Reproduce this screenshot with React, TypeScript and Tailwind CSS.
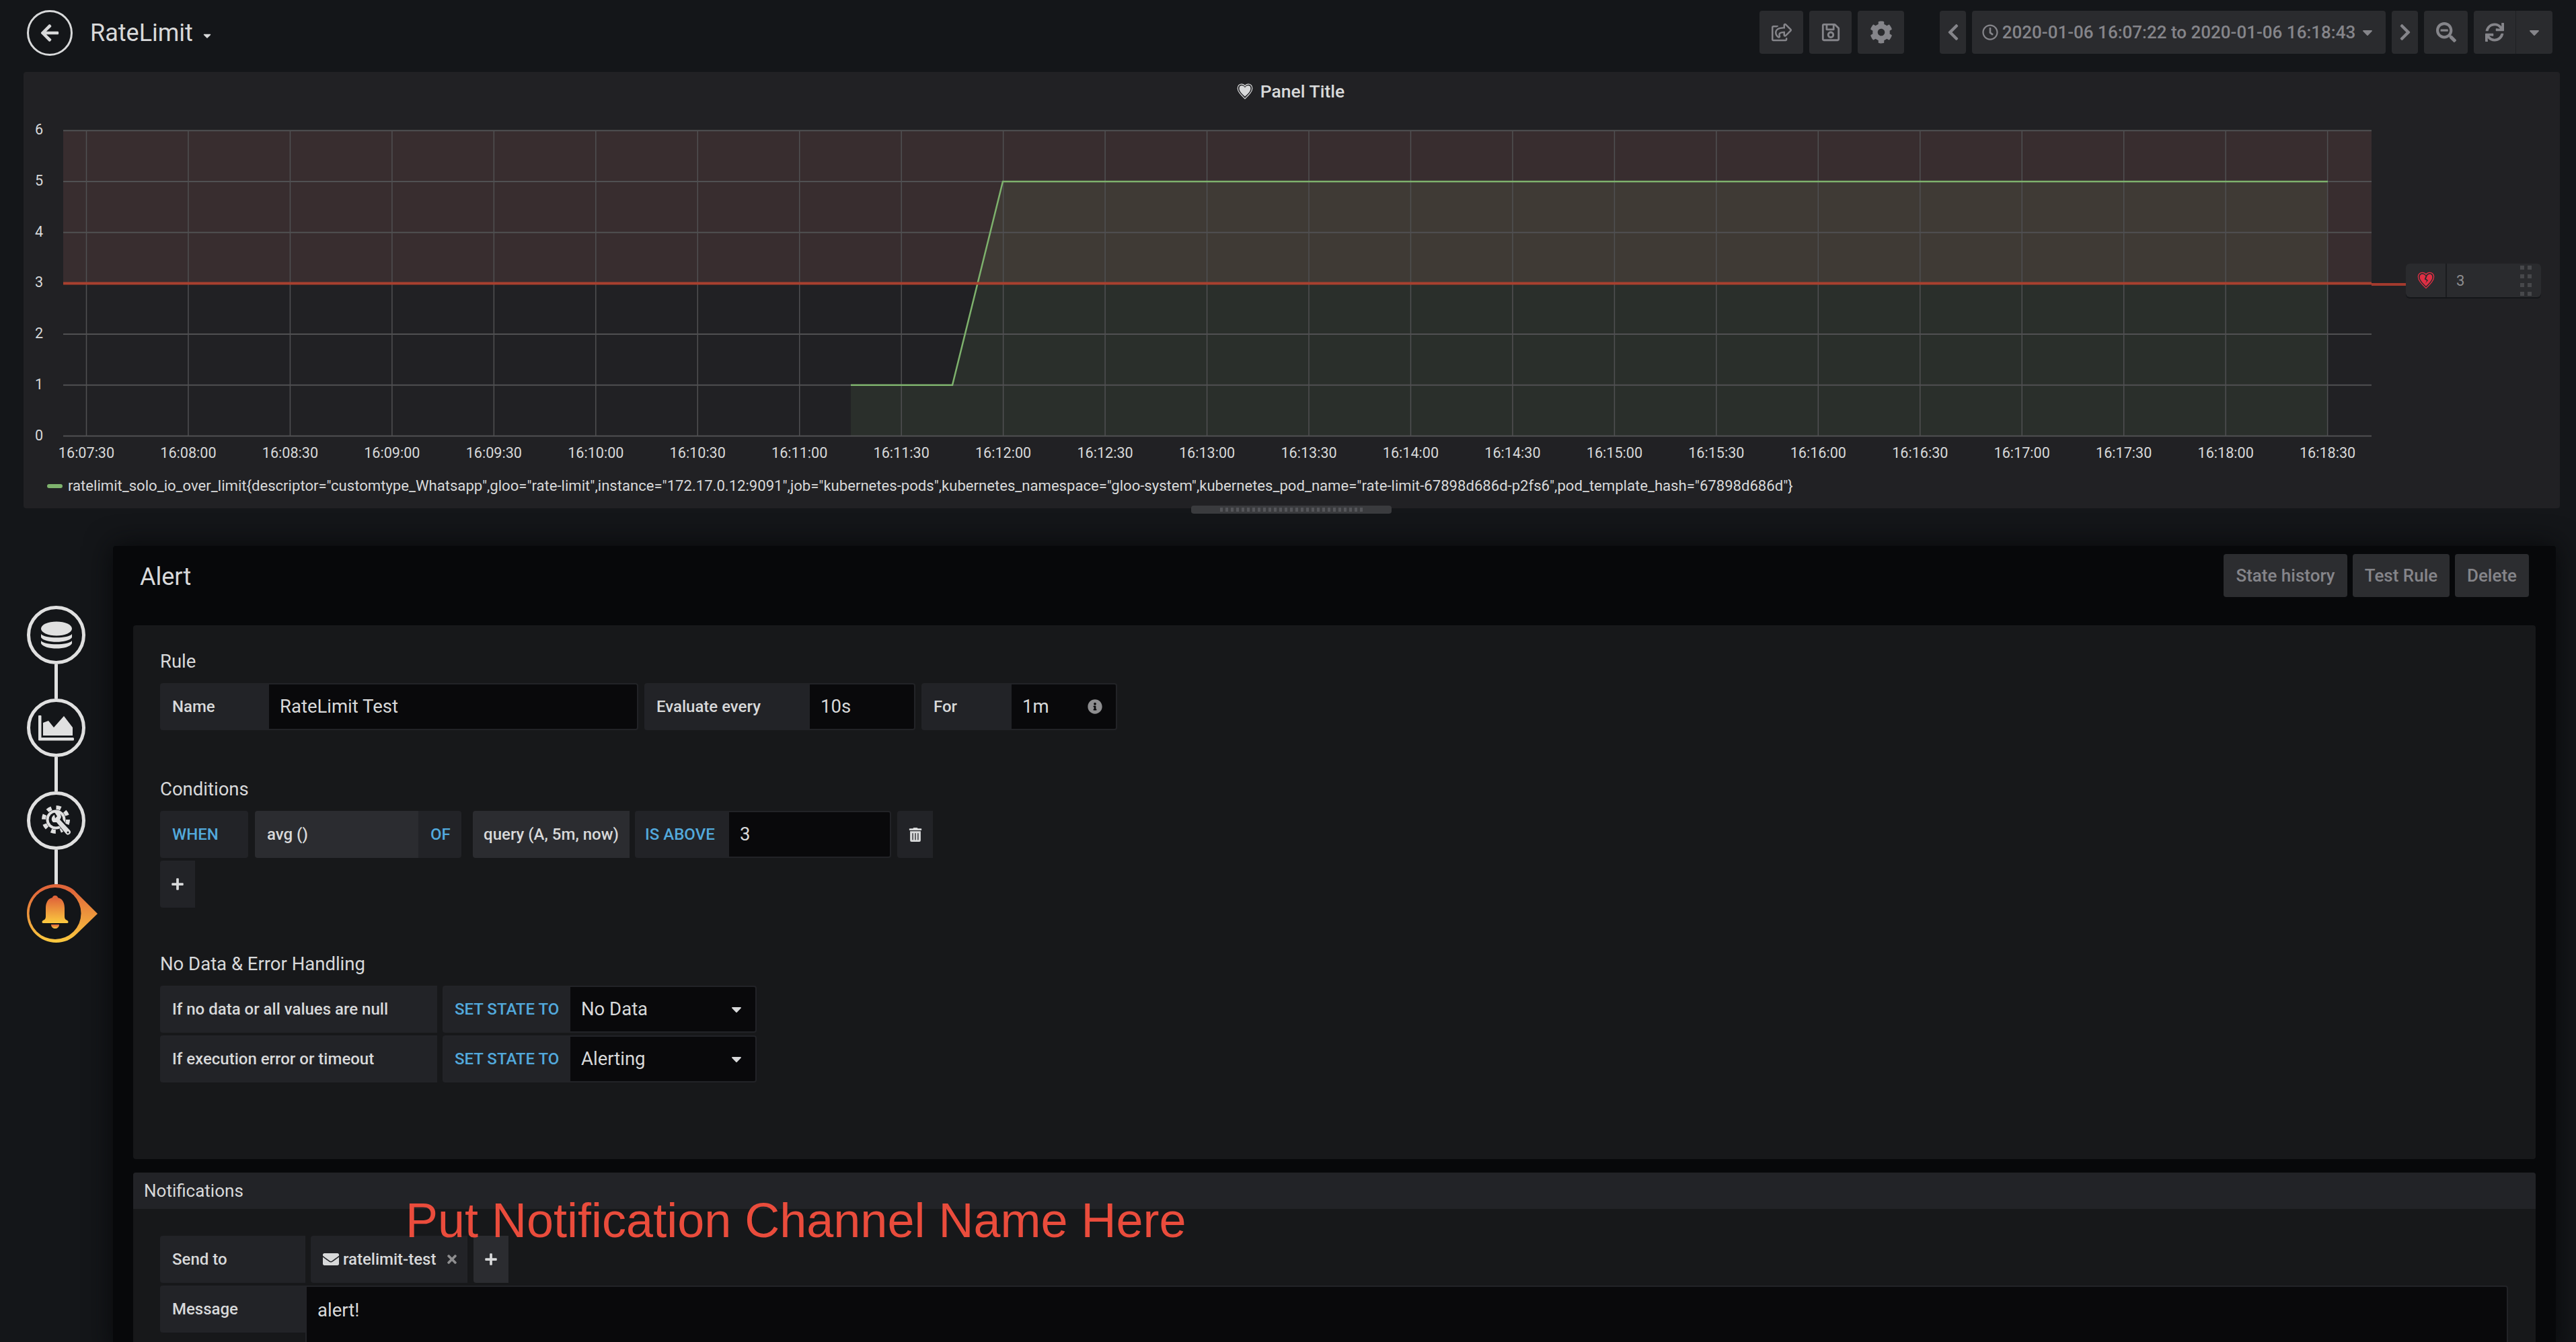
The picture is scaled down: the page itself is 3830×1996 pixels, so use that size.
import { FaArrowLeft, FaCaretDown, FaChevronLeft, FaChevronRight, FaCog, FaEnvelope, FaInfoCircle, FaPlus, FaRegClock, FaRegSave, FaRegShareSquare, FaSearchMinus, FaSync, FaTimes, FaTrashAlt } from "react-icons/fa"

const font = "font-['Roboto',sans-serif]"

const xLabels = ["16:07:30","16:08:00","16:08:30","16:09:00","16:09:30","16:10:00","16:10:30","16:11:00","16:11:30","16:12:00","16:12:30","16:13:00","16:13:30","16:14:00","16:14:30","16:15:00","16:15:30","16:16:00","16:16:30","16:17:00","16:17:30","16:18:00","16:18:30"]
const yLabels = [6, 5, 4, 3, 2, 1, 0]

const yOf = (v: number) => 648.5 - v * 75.7
const xOf = (i: number) => 128.5 + i * 151.46

const heartPath = "M12 22 C6 16 2 12 2 7.5 C2 4 4.6 2 7.2 2 C9.2 2 11 3 12 4.6 C13 3 14.8 2 16.8 2 C19.4 2 22 4 22 7.5 C22 12 18 16 12 22 Z"

function Chart() {
  const areaTop = `M1265 ${yOf(1)} L1416 ${yOf(1)} L1491 ${yOf(5)} L3461 ${yOf(5)}`
  return (
    <svg viewBox="35 107 3771 588" className="block w-full h-[588px]">
      <rect x="94" y={yOf(6)} width="3432" height={yOf(3) - yOf(6)} fill="#382d2f" />
      <path d={`${areaTop} L3461 ${yOf(0)} L1265 ${yOf(0)} Z`} fill="#7eb26d" fillOpacity="0.1" />
      {yLabels.map((v) => (
        <g key={v}>
          <line x1="94" x2="3526" y1={yOf(v)} y2={yOf(v)} stroke="#505052" strokeWidth="2" />
          <text x="58" y={yOf(v) + 6} textAnchor="middle" fill="#d8d9da" fontSize="21.6" fontFamily="Roboto">{v}</text>
        </g>
      ))}
      {xLabels.map((t, i) => (
        <g key={t}>
          <line x1={xOf(i)} x2={xOf(i)} y1={yOf(6)} y2={yOf(0)} stroke="#505052" strokeWidth="1.5" />
          <text x={xOf(i)} y="681" textAnchor="middle" fill="#d8d9da" fontSize="21.6" fontFamily="Roboto">{t}</text>
        </g>
      ))}
      <path d={areaTop} fill="none" stroke="#7eb26d" strokeWidth="2.5" />
      <line x1="94" x2="3526" y1={yOf(3)} y2={yOf(3)} stroke="#a8402f" strokeWidth="4" />
    </svg>
  )
}

function BrokenHeart({ className }: { className: string }) {
  return (
    <svg viewBox="0 0 24 24" className={className}>
      <path d={heartPath} fill="none" stroke="currentColor" strokeWidth="1.1" />
      <path d="M12 19.5 C7.5 15 4 11.5 4 7.8 C4 5.4 5.6 4 7.4 4 C9 4 10.4 5 11.6 6.6 L10 10.5 L13 12.5 L11 16 L14.6 12 L12 9.8 L13.6 5.9 C14.4 4.8 15.4 4 16.8 4 C18.6 4 20 5.4 20 7.8 C20 11.5 16.5 15 12 19.5 Z" fill="currentColor" />
    </svg>
  )
}

function ToolButton({ className, children }: { className: string; children: React.ReactNode }) {
  return <div className={`h-16 flex items-center justify-center rounded bg-[#2a2b2e] text-[#85858a] ${className}`}>{children}</div>
}

function Label({ className = "", children }: { className?: string; children: React.ReactNode }) {
  return <div className={`h-[70px] flex items-center rounded-l bg-[#222327] text-[24px] font-medium text-[#d8d9da] ${className}`}>{children}</div>
}

function Keyword({ className = "", children }: { className?: string; children: React.ReactNode }) {
  return <div className={`h-[70px] flex items-center rounded bg-[#222327] text-[24px] font-medium text-[#52a9dc] ${className}`}>{children}</div>
}

function Field({ className = "", children }: { className?: string; children: React.ReactNode }) {
  return <div className={`h-[70px] flex items-center rounded-r border-2 border-l-0 border-[#222327] bg-[#09090b] text-[27.5px] text-[#d8d9da] ${className}`}>{children}</div>
}

function StepCircle({ children }: { children: React.ReactNode }) {
  return <div className="w-[87px] h-[87px] shrink-0 flex items-center justify-center rounded-full border-[5px] border-[#e0e0e0]">{children}</div>
}

const Connector = () => <div className="w-[5px] h-[51px] bg-[#e0e0e0]" />

function Steps() {
  return (
    <div className="w-[168px] shrink-0 pt-[145px] pl-10">
      <div className="w-[87px] flex flex-col items-center">
        <StepCircle>
          <svg viewBox="0 0 48 42" className="w-[48px] h-[42px]" fill="#e0e0e0">
            <ellipse cx="24" cy="11" rx="23" ry="10.5" />
            <path d="M1 19 C6 26 42 26 47 19 L47 24 C42 33 6 33 1 24 Z" />
            <path d="M1 29 C6 36 42 36 47 29 L47 33 C42 43 6 43 1 33 Z" />
          </svg>
        </StepCircle>
        <Connector />
        <StepCircle>
          <svg viewBox="0 0 54 38" className="w-[54px] h-[38px]" fill="#e0e0e0">
            <rect x="0" y="0" width="4.5" height="37" rx="1" />
            <rect x="0" y="33" width="53" height="4.5" rx="1.5" />
            <path d="M7 30 L7 11 L15 8 L23 18 L38 1 L51 18 L51 30 Z" />
          </svg>
        </StepCircle>
        <Connector />
        <StepCircle>
          <svg viewBox="0 0 48 48" className="w-[48px] h-[48px]">
            <circle cx="23" cy="22" r="18" fill="none" stroke="#e0e0e0" strokeWidth="6" strokeDasharray="7 7.14" />
            <circle cx="23" cy="22" r="14.5" fill="#e0e0e0" />
            <circle cx="23" cy="22" r="10.5" fill="#131518" />
            <path d="M24 18 L42 42" stroke="#131518" strokeWidth="10" />
            <path d="M21 15 A6.5 6.5 0 0 0 19 26 L24 26 L38 43 A3.5 3.5 0 0 0 44 38 L29 22 A7 7 0 0 0 21 11 L25 17 L22 20 Z" fill="#e0e0e0" />
            <circle cx="41" cy="41" r="1.5" fill="#131518" />
          </svg>
        </StepCircle>
        <Connector />
        <div className="relative w-[87px] h-[87px]">
          <svg viewBox="0 0 110 87" className="absolute left-0 top-0 w-[110px] h-[87px]">
            <defs>
              <linearGradient id="active" x1="0" y1="0" x2="0" y2="1">
                <stop offset="0.1" stopColor="#e0663a" />
                <stop offset="1" stopColor="#fbca3f" />
              </linearGradient>
            </defs>
            <path d="M43.5 0 C56 0 68 5 73 12 L105 44 L73 75 C66 82 56 87 43.5 87 C19.5 87 0 67.5 0 43.5 C0 19.5 19.5 0 43.5 0 Z" fill="url(#active)" />
            <circle cx="42" cy="43.5" r="38.5" fill="#131518" />
            <path d="M42 17 C45 17 46 19 46 20 C54 22 56 29 56 36 L56 48 C56 52 58 53 60 54 C62 55 62 58 60 58 L24 58 C22 58 22 55 24 54 C26 53 28 52 28 48 L28 36 C28 29 30 22 38 20 C38 19 39 17 42 17 Z" fill="url(#active)" />
            <path d="M36 60 L48 60 C48 64 45 66 42 66 C39 66 36 64 36 60 Z" fill="url(#active)" />
          </svg>
        </div>
      </div>
    </div>
  )
}

export default function App() {
  return (
    <div className={`w-[3830px] h-[1996px] overflow-hidden bg-[#141619] ${font}`}>
      {/* Navbar */}
      <div className="h-[107px] flex items-start">
        <div className="pl-10 pt-[15px] flex items-center">
          <div className="w-[68px] h-[68px] flex items-center justify-center rounded-full border-[3px] border-[#d8d9da] text-[#d8d9da]">
            <FaArrowLeft className="w-[30px] h-[30px]" />
          </div>
          <span className="ml-[26px] text-[36px] text-[#d8d9da]">RateLimit</span>
          <FaCaretDown className="ml-3 mt-2 w-[18px] h-[18px] text-[#d8d9da]" />
        </div>
        <div className="ml-auto mr-[35px] mt-4 flex items-center">
          <ToolButton className="w-[65px]"><FaRegShareSquare className="w-[30px] h-[30px]" /></ToolButton>
          <ToolButton className="w-[63px] ml-[9px]"><FaRegSave className="w-[30px] h-[30px]" /></ToolButton>
          <ToolButton className="w-[69px] ml-[9px]"><FaCog className="w-[34px] h-[34px]" /></ToolButton>
          <ToolButton className="w-[39px] ml-[53px]"><FaChevronLeft className="w-7 h-7" /></ToolButton>
          <ToolButton className="w-[615px] ml-[9px] text-[26px] font-medium gap-[6px]">
            <FaRegClock className="w-[24px] h-[24px]" />
            <span>2020-01-06 16:07:22 to 2020-01-06 16:18:43</span>
            <FaCaretDown className="w-6 h-6" />
          </ToolButton>
          <ToolButton className="w-[39px] ml-[9px]"><FaChevronRight className="w-7 h-7" /></ToolButton>
          <ToolButton className="w-[65px] ml-[9px]"><FaSearchMinus className="w-[30px] h-[30px]" /></ToolButton>
          <ToolButton className="w-[117px] ml-[9px]">
            <div className="w-[63px] h-full flex items-center justify-center border-r border-[#1f2023]"><FaSync className="w-7 h-7" /></div>
            <div className="flex-1 flex items-center justify-center"><FaCaretDown className="w-6 h-6" /></div>
          </ToolButton>
        </div>
      </div>

      {/* Graph panel */}
      <div className="relative mx-[35px] mr-6 h-[649px] bg-[#212124] rounded">
        <div className="absolute left-0 right-[4px] top-[9px] flex items-center justify-center gap-[10px] text-[26.5px] font-medium text-[#d8d9da]">
          <svg viewBox="0 0 24 24" className="w-[26px] h-[26px]">
            <path d={heartPath} fill="none" stroke="#d8d9da" strokeWidth="1.1" />
            <path d="M12 19 C7.5 15 4.2 11.5 4.2 7.8 C4.2 5.4 5.6 4 7.4 4 C9.2 4 11 5 12 7 C13 5 14.8 4 16.6 4 C18.4 4 19.8 5.4 19.8 7.8 C19.8 11.5 16.5 15 12 19 Z" fill="#d8d9da" />
          </svg>
          <span>Panel Title</span>
        </div>
        <Chart />
        <div className="mt-[11px] flex items-center pl-[35px] text-[22.1px] text-[#d8d9da] whitespace-nowrap">
          <span className="w-[23px] h-[6px] mr-[8px] rounded-sm bg-[#7eb26d]" />
          ratelimit_solo_io_over_limit{'{'}descriptor="customtype_Whatsapp",gloo="rate-limit",instance="172.17.0.12:9091",job="kubernetes-pods",kubernetes_namespace="gloo-system",kubernetes_pod_name="rate-limit-67898d686d-p2fs6",pod_template_hash="67898d686d"{'}'}
        </div>
        {/* threshold handle */}
        <div className="absolute left-[3491px] top-[314px] w-[52px] h-[4px] bg-[#a33a2e]" />
        <div className="absolute left-[3542px] top-[285px] w-[201px] h-[50px] flex items-center rounded-md bg-[#2a2b2e] shadow-[0_2px_0_#141619]">
          <div className="w-[61px] h-full flex items-center justify-center border-r-2 border-[#1b1c1f] text-[#e02f44]"><BrokenHeart className="w-7 h-7" /></div>
          <span className="ml-[14px] text-[22px] text-[#8e8e90]">3</span>
          <div className="ml-auto mr-[14px] grid grid-cols-2 gap-x-[5px] gap-y-[7px]">
            {Array.from({ length: 8 }).map((_, i) => <span key={i} className="w-[6px] h-[6px] bg-[#47484b]" />)}
          </div>
        </div>
        {/* resize handle */}
        <div className="absolute left-[1736px] top-[645px] w-[298px] h-3 flex items-center justify-center gap-[4px] rounded bg-[#3a3b3e]">
          {Array.from({ length: 27 }).map((_, i) => <span key={i} className="w-[4px] h-[6px] bg-[#55565a]" />)}
        </div>
      </div>

      {/* Editor */}
      <div className="flex">
        <Steps />
        <div className="mt-[56px] w-[3632px] h-[1200px] pt-0 px-[30px] bg-[#07080a] rounded-t shadow-[0_0_40px_#07080a]">
          <div className="h-[118px] flex items-start">
            <div className="ml-[10px] mt-[26px] text-[36px] leading-[40px] text-[#d8d9da]">Alert</div>
            <div className="ml-auto mr-[10px] mt-3 flex gap-2 text-[26px] font-medium text-[#85858a]">
              <div className="w-[184px] h-16 flex items-center justify-center rounded bg-[#2c2d30]">State history</div>
              <div className="w-[144px] h-16 flex items-center justify-center rounded bg-[#2c2d30]">Test Rule</div>
              <div className="w-[110px] h-16 flex items-center justify-center rounded bg-[#2c2d30]">Delete</div>
            </div>
          </div>

          <div className="h-[794px] pl-10 pt-[39px] bg-[#17181a] rounded text-[#d8d9da]">
            <div className="text-[27.5px] leading-[30px]">Rule</div>
            <div className="mt-[17px] flex">
              <Label className="w-[162px] pl-[18px]">Name</Label>
              <Field className="w-[549px] pl-4">RateLimit Test</Field>
              <Label className="ml-[9px] w-[246px] pl-[18px]">Evaluate every</Label>
              <Field className="w-[157px] pl-4">10s</Field>
              <Label className="ml-[9px] w-[134px] pl-[18px]">For</Label>
              <Field className="w-[157px] pl-4">
                1m
                <FaInfoCircle className="ml-auto mr-[20px] w-[22px] h-[22px] text-[#8e8e90]" />
              </Field>
            </div>

            <div className="mt-[73px] text-[27.5px] leading-[30px]">Conditions</div>
            <div className="mt-[17px] flex">
              <Keyword className="w-[131px] pl-[18px]">WHEN</Keyword>
              <div className="ml-[10px] w-[243px] h-[70px] pl-[18px] flex items-center rounded-l bg-[#2b2c30] text-[24px] font-medium">avg ()</div>
              <Keyword className="w-[64px] pl-[18px] rounded-l-none">OF</Keyword>
              <div className="ml-[17px] w-[233px] h-[70px] flex items-center justify-center rounded-l bg-[#2b2c30] text-[24px] font-medium">query (A, 5m, now)</div>
              <Keyword className="ml-2 w-[140px] pl-[15px] rounded-r-none">IS ABOVE</Keyword>
              <Field className="w-[241px] pl-4">3</Field>
              <div className="ml-[9px] w-[53px] h-[70px] flex items-center justify-center rounded-l bg-[#222327] text-[#d8d9da]"><FaTrashAlt className="w-[20px] h-[21px]" /></div>
            </div>
            <div className="mt-1 w-[52px] h-[70px] flex items-center justify-center rounded-l bg-[#222327] text-[#d8d9da]"><FaPlus className="w-5 h-5" /></div>

            <div className="mt-[69px] text-[27.5px] leading-[30px]">No Data &amp; Error Handling</div>
            <div className="mt-[17px] flex">
              <Label className="w-[412px] pl-[18px]">If no data or all values are null</Label>
              <Keyword className="ml-2 w-[190px] pl-[18px] rounded-r-none">SET STATE TO</Keyword>
              <Field className="w-[277px] pl-4">No Data<FaCaretDown className="ml-auto mr-4 w-6 h-6" /></Field>
            </div>
            <div className="mt-1 flex">
              <Label className="w-[412px] pl-[18px]">If execution error or timeout</Label>
              <Keyword className="ml-2 w-[190px] pl-[18px] rounded-r-none">SET STATE TO</Keyword>
              <Field className="w-[277px] pl-4">Alerting<FaCaretDown className="ml-auto mr-4 w-6 h-6" /></Field>
            </div>
          </div>

          <div className="relative mt-5 h-[400px] bg-[#17181a] rounded-t">
            <div className="h-[54px] pl-4 flex items-center bg-[#222327] rounded-t text-[26px] text-[#d8d9da]">Notifications</div>
            <div className="absolute left-[405px] top-[29px] font-['Liberation_Sans',sans-serif] text-[72px] leading-[84px] whitespace-nowrap text-[#ea4c3c]">Put Notification Channel Name Here</div>
            <div className="mt-10 ml-10 flex">
              <Label className="w-[216px] pl-[18px]">Send to</Label>
              <div className="ml-2 w-[233px] h-[70px] pl-[18px] flex items-center gap-[6px] rounded-l bg-[#222327] text-[24px] font-medium text-[#d8d9da]">
                <FaEnvelope className="w-6 h-6" />
                ratelimit-test
                <FaTimes className="ml-2 w-[20px] h-[20px] text-[#8e8e90]" />
              </div>
              <div className="ml-[9px] w-[52px] h-[70px] flex items-center justify-center rounded-l bg-[#2b2c30] text-[#d8d9da]"><FaPlus className="w-5 h-5" /></div>
            </div>
            <div className="mt-1 ml-10 mr-[41px] flex items-start">
              <Label className="w-[216px] pl-[18px]">Message</Label>
              <div className="flex-1 h-[200px] pl-4 pt-[14px] rounded-tr border-2 border-[#222327] bg-[#09090b] text-[27.5px] text-[#d8d9da]">alert!</div>
            </div>
          </div>
        </div>
      </div>
    </div>
  )
}
